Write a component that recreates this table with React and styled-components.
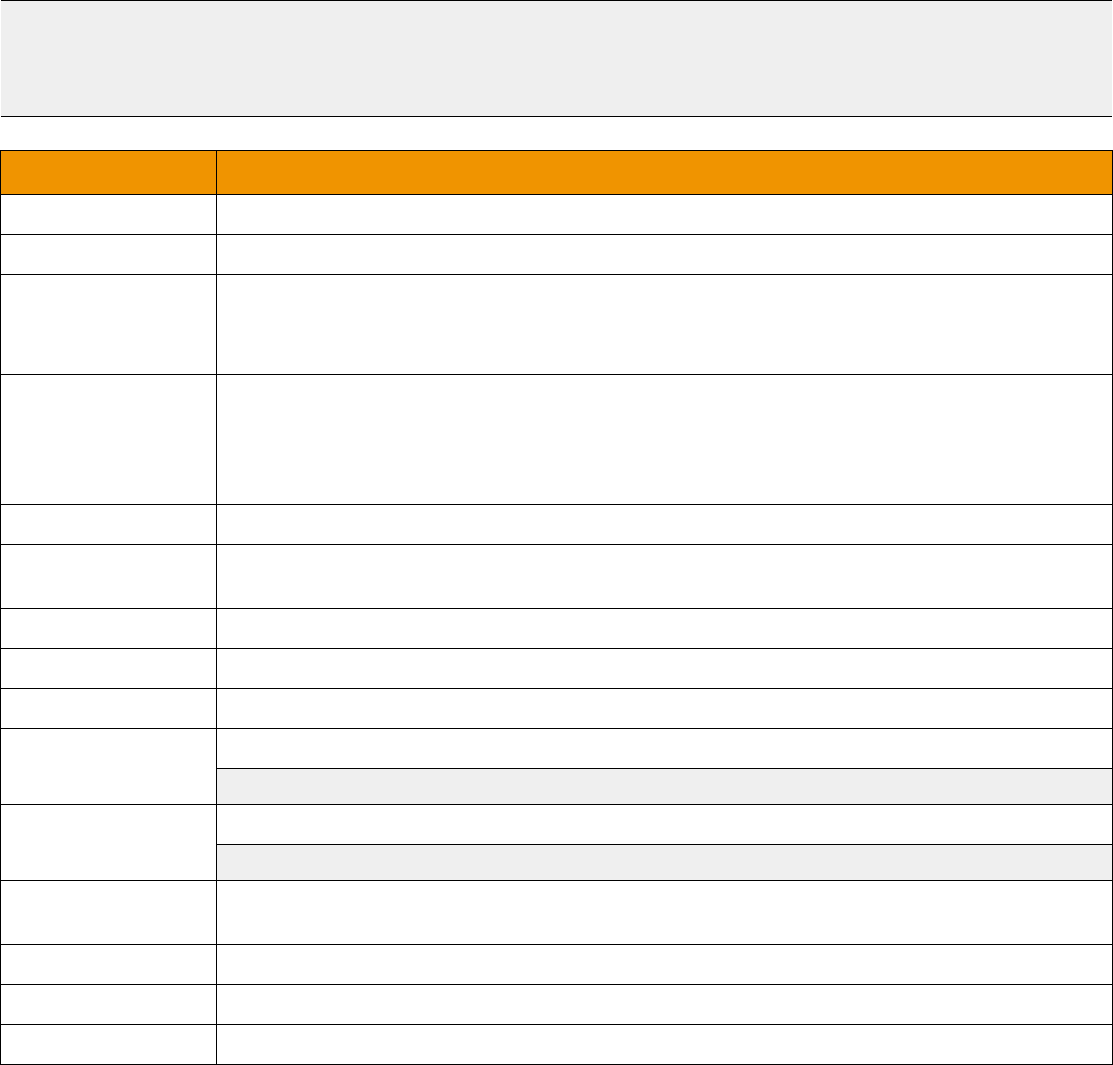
import React from 'react'
import styled, { createGlobalStyle } from 'styled-components'

const GlobalStyle = createGlobalStyle`
  body {
    margin: 0;
    background: #fff;
    font-family: 'Liberation Sans', Arial, sans-serif;
  }
`

const Banner = styled.header`
  height: 115px;
  margin: 0 1px;
  background: #efefef;
  border-top: 1px solid #000;
  border-bottom: 1px solid #000;
`

const Table = styled.table`
  width: 1113px;
  margin-top: 33px;
  border-collapse: collapse;
  table-layout: fixed;
`

const HeadCell = styled.th`
  height: 43px;
  padding: 0;
  background: #f09400;
  border: 1px solid #000;
`

const Cell = styled.td`
  height: ${(p) => p.h - 1}px;
  padding: 0;
  border: 1px solid #000;
  background: ${(p) => (p.shaded ? '#efefef' : '#fff')};
  vertical-align: top;
`

const rows = [40, 40, 100, 130, 40, 64, 40, 40, 40, 'split', 'split', 64, 40, 40, 40]

export default function App() {
  return (
    <>
      <GlobalStyle />
      <Banner />
      <Table>
        <colgroup>
          <col style={{ width: 216 }} />
          <col />
        </colgroup>
        <thead>
          <tr>
            <HeadCell />
            <HeadCell />
          </tr>
        </thead>
        <tbody>
          {rows.map((h, i) =>
            h === 'split' ? (
              <React.Fragment key={i}>
                <tr>
                  <Cell h={40} rowSpan={2} />
                  <Cell h={40} />
                </tr>
                <tr>
                  <Cell h={36} shaded />
                </tr>
              </React.Fragment>
            ) : (
              <tr key={i}>
                <Cell h={h} />
                <Cell h={h} />
              </tr>
            )
          )}
        </tbody>
      </Table>
    </>
  )
}
